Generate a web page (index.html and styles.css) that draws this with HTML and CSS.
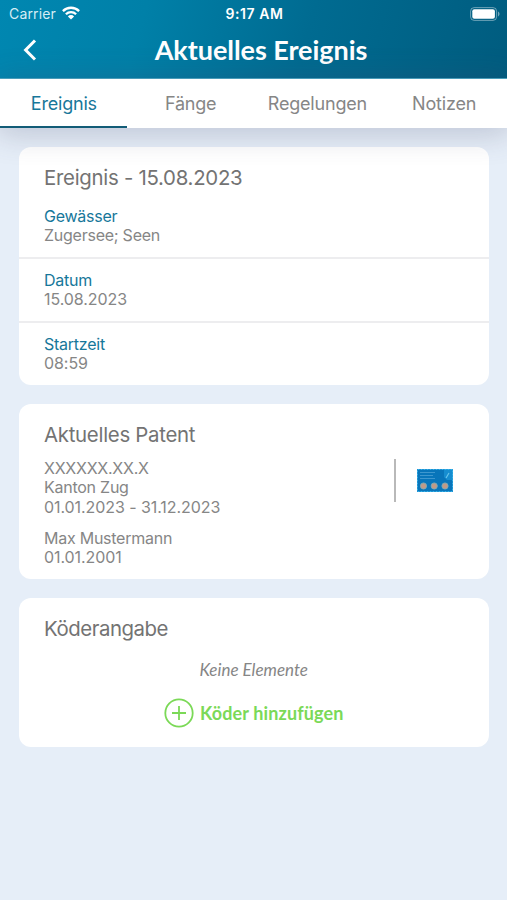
FILE: index.html
```html
<!DOCTYPE html>
<html lang="de">
<head>
<meta charset="utf-8">
<meta name="viewport" content="width=device-width, initial-scale=1">
<title>Aktuelles Ereignis</title>
<link rel="stylesheet" href="styles.css">
</head>
<body>
<header class="header">
  <div class="status">
    <div class="carrier"><span>Carrier</span>
      <svg width="18" height="14" viewBox="0 0 18 14" fill="none" stroke="#fff" stroke-width="2.3"><path d="M.9 5.1a11.5 11.5 0 0 1 16.2 0M3.9 8.2a7.2 7.2 0 0 1 10.2 0"/><path d="M9 13.6 5.9 10.4a4.4 4.4 0 0 1 6.2 0Z" fill="#fff" stroke="none"/></svg>
    </div>
    <div class="time">9:17 AM</div>
    <svg class="battery" width="30" height="14" viewBox="0 0 30 14"><rect x=".6" y=".6" width="26" height="12.8" rx="3.6" fill="none" stroke="#fff" stroke-opacity=".42"/><rect x="2.3" y="2.3" width="22.6" height="9.4" rx="2" fill="#fff"/><path d="M28 4.6c2 .7 2 4.1 0 4.8Z" fill="#fff" fill-opacity=".45"/></svg>
  </div>
  <div class="navbar">
    <svg class="back" width="14" height="22" viewBox="0 0 14 22" fill="none" stroke="#fff" stroke-width="3"><path d="M12 1.5 2.6 11 12 20.5"/></svg>
    <h1 class="title">Aktuelles Ereignis</h1>
  </div>
</header>
<nav class="tabs">
  <a class="tab active">Ereignis</a>
  <a class="tab">Fänge</a>
  <a class="tab">Regelungen</a>
  <a class="tab">Notizen</a>
</nav>
<main class="content">
  <section class="card event">
    <h2>Ereignis - 15.08.2023</h2>
    <div class="field"><div class="label">Gewässer</div><div>Zugersee; Seen</div></div>
    <div class="field"><div class="label">Datum</div><div class="numeric">15.08.2023</div></div>
    <div class="field"><div class="label">Startzeit</div><div class="numeric">08:59</div></div>
  </section>
  <section class="card patent">
    <div class="info">
      <h2>Aktuelles Patent</h2>
      <div>XXXXXX.XX.X</div>
      <div>Kanton Zug</div>
      <div class="numeric">01.01.2023 - 31.12.2023</div>
      <div class="holder">Max Mustermann</div>
      <div class="numeric">01.01.2001</div>
    </div>
    <div class="preview">
      <svg width="36" height="23" viewBox="0 0 36 23"><path fill="#0875ba" d="M0 0h36v23H0z"/><path fill="#168dd0" d="M27 0h9v11h-6l-3-3z"/><path stroke="#4b9fd4" stroke-width=".8" d="M3 3.5h15M3 6.5h13M3 9.5h15"/><path stroke="#69c5ec" stroke-width="1.2" d="m29 9 3-5"/><path fill="none" stroke="#36b0e9" stroke-dasharray="2 1" d="M.5.5h35v22H.5z"/><g fill="#c09a88" stroke="#7fa9b4" stroke-width=".9"><circle cx="6.5" cy="17" r="3.1"/><circle cx="17.2" cy="17" r="3.1"/><circle cx="28" cy="17" r="3.1"/></g></svg>
    </div>
  </section>
  <section class="card bait">
    <h2>Köderangabe</h2>
    <div class="empty">Keine Elemente</div>
    <a class="add"><svg width="30" height="30" viewBox="0 0 30 30" fill="none" stroke="#7bd957" stroke-width="1.8"><circle cx="15" cy="15" r="13.7"/><path d="M15 8v14M8 15h14"/></svg><span>Köder hinzufügen</span></a>
  </section>
</main>
</body>
</html>
```

FILE: styles.css
```css
* { box-sizing: border-box; }
body {
  margin: 0;
  min-height: 900px;
  background: #e6eef8;
  color: #868686;
  font: 16px/19.3px Inter, "Liberation Sans", sans-serif;
  letter-spacing: -.25px;
}
h1, h2 { margin: 0; }
.header {
  height: 79px;
  color: #fff;
  background: linear-gradient(105deg, #0087b1 0%, #0080a8 28%, #006b91 60%, #005c7f 100%);
  border-bottom: 1px solid #4ba8c4;
}
.status {
  display: grid;
  grid-template-columns: 1fr auto 1fr;
  align-items: center;
  height: 27px;
  padding: 0 7px 0 9px;
  font-size: 14px;
}
.carrier { display: flex; align-items: center; gap: 6px; color: #d5edf5; letter-spacing: .15px; }
.time { font-weight: 600; letter-spacing: .6px; }
.battery { justify-self: end; }
.navbar {
  display: grid;
  grid-template-columns: 60px 1fr 45px;
  align-items: center;
  height: 46px;
}
.back { margin-left: 23px; }
.title { text-align: center; font: 700 27px/32px Lato, sans-serif; letter-spacing: -.05px; }
.tabs {
  position: relative;
  display: grid;
  grid-template-columns: repeat(4, 1fr);
  height: 49px;
  background: #fff;
  box-shadow: 0 3px 30px 4px rgba(65, 70, 105, .24);
}
.tab {
  display: flex;
  align-items: center;
  justify-content: center;
  padding: 2px 0 0 1px;
  font-size: 18px;
  letter-spacing: -.2px;
  border-bottom: 2px solid transparent;
}
.tab.active { color: #17779a; border-bottom-color: #125c77; }
.content { display: flex; flex-direction: column; gap: 19px; padding: 18.5px 18.5px 0 19px; }
.card { background: #fff; border-radius: 12px; }
.card h2 { color: #737373; font-size: 20.4px; font-weight: 400; line-height: 26px; letter-spacing: -.28px; }
.event { height: 238px; }
.event h2 { padding: 18px 25px 0; }
.field { height: 64px; padding: 12.5px 25px 0; border-bottom: 2px solid #ededef; }
.event h2 + .field { height: 68px; padding-top: 16.5px; }
.field:last-child { border: 0; }
.label { color: #17779a; }
.numeric { letter-spacing: -.07px; }
.patent { height: 175px; display: flex; justify-content: space-between; padding: 18px 36px 0 25px; }
.patent h2 { margin-bottom: 11.5px; }
.holder { margin-top: 12px; }
.preview { height: 43px; margin-top: 37px; padding-left: 21px; border-left: 2px solid #b9b9b9; display: flex; align-items: center; }
.bait { height: 149px; padding: 18px 25px 0; }
.bait h2 { letter-spacing: -.45px; }
.empty { margin-top: 18px; text-align: center; font: italic 17px/20px Lato, sans-serif; letter-spacing: 0; }
.add { display: flex; justify-content: center; align-items: center; gap: 6px; margin-top: 18px; color: #7bd957; font: 700 18px/30px Lato, sans-serif; letter-spacing: .13px; }
```
